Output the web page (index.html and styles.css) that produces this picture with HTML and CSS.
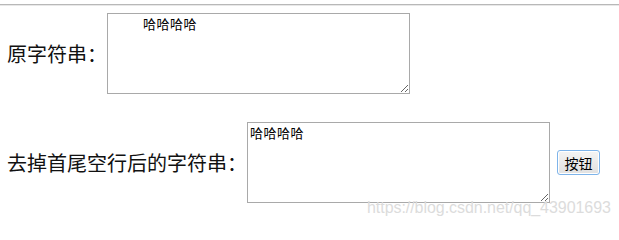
FILE: index.html
```html
<!DOCTYPE html>
<html lang="zh-CN">
<head>
<meta charset="utf-8">
<title>去掉首尾空行</title>
<link rel="stylesheet" href="styles.css">
</head>
<body>
<hr class="rule">
<div class="row row-first">
  <label class="label" for="src">原字符串：</label>
  <textarea id="src" class="box">        哈哈哈哈</textarea>
</div>
<div class="row row-second">
  <label class="label" for="dst">去掉首尾空行后的字符串：</label>
  <textarea id="dst" class="box">哈哈哈哈</textarea>
  <button class="btn" type="button">按钮</button>
</div>
<div class="watermark">https://blog.csdn.net/qq_43901693</div>
</body>
</html>
```

FILE: styles.css
```css
html, body {
  margin: 0;
  padding: 0;
  background: #ffffff;
}

body {
  position: relative;
  width: 619px;
  height: 227px;
  overflow: hidden;
  font-family: "Noto Sans CJK SC", "Noto Sans", sans-serif;
  color: #000000;
}

.rule {
  margin: 4px 0 0 0;
  height: 0;
  border: 0;
  border-top: 1px solid #b8b8b8;
  border-bottom: 1px solid #e8e8e8;
}

.row {
  display: flex;
  align-items: center;
  padding-left: 7px;
}

.row-first {
  margin-top: 7px;
}

.row-second {
  margin-top: 28px;
}

.label {
  font-size: 20px;
  line-height: 24px;
  white-space: nowrap;
  color: #111111;
}

.box {
  box-sizing: border-box;
  width: 303px;
  height: 81px;
  margin: 0;
  padding: 2px;
  border: 1px solid #a9a9a9;
  font-family: "Liberation Sans", "Noto Sans CJK SC", sans-serif;
  font-size: 13px;
  line-height: 17px;
  letter-spacing: 0.5px;
  color: #000000;
  background: #ffffff;
  resize: both;
}

.btn {
  box-sizing: border-box;
  width: 43px;
  height: 25px;
  margin-left: 7px;
  padding: 0;
  border: 1px solid #7eb4ea;
  border-radius: 3px;
  background: linear-gradient(#f4f4f4, #e1e1e1);
  box-shadow: inset 0 0 0 1px #ffffff;
  font-family: "Noto Sans CJK SC", sans-serif;
  font-size: 14px;
  color: #000000;
}

.watermark {
  position: absolute;
  left: 367px;
  top: 199px;
  font-family: "Liberation Sans", Arial, sans-serif;
  font-size: 16px;
  line-height: 18px;
  letter-spacing: -0.05px;
  color: #dcdcdc;
  white-space: nowrap;
}
```
